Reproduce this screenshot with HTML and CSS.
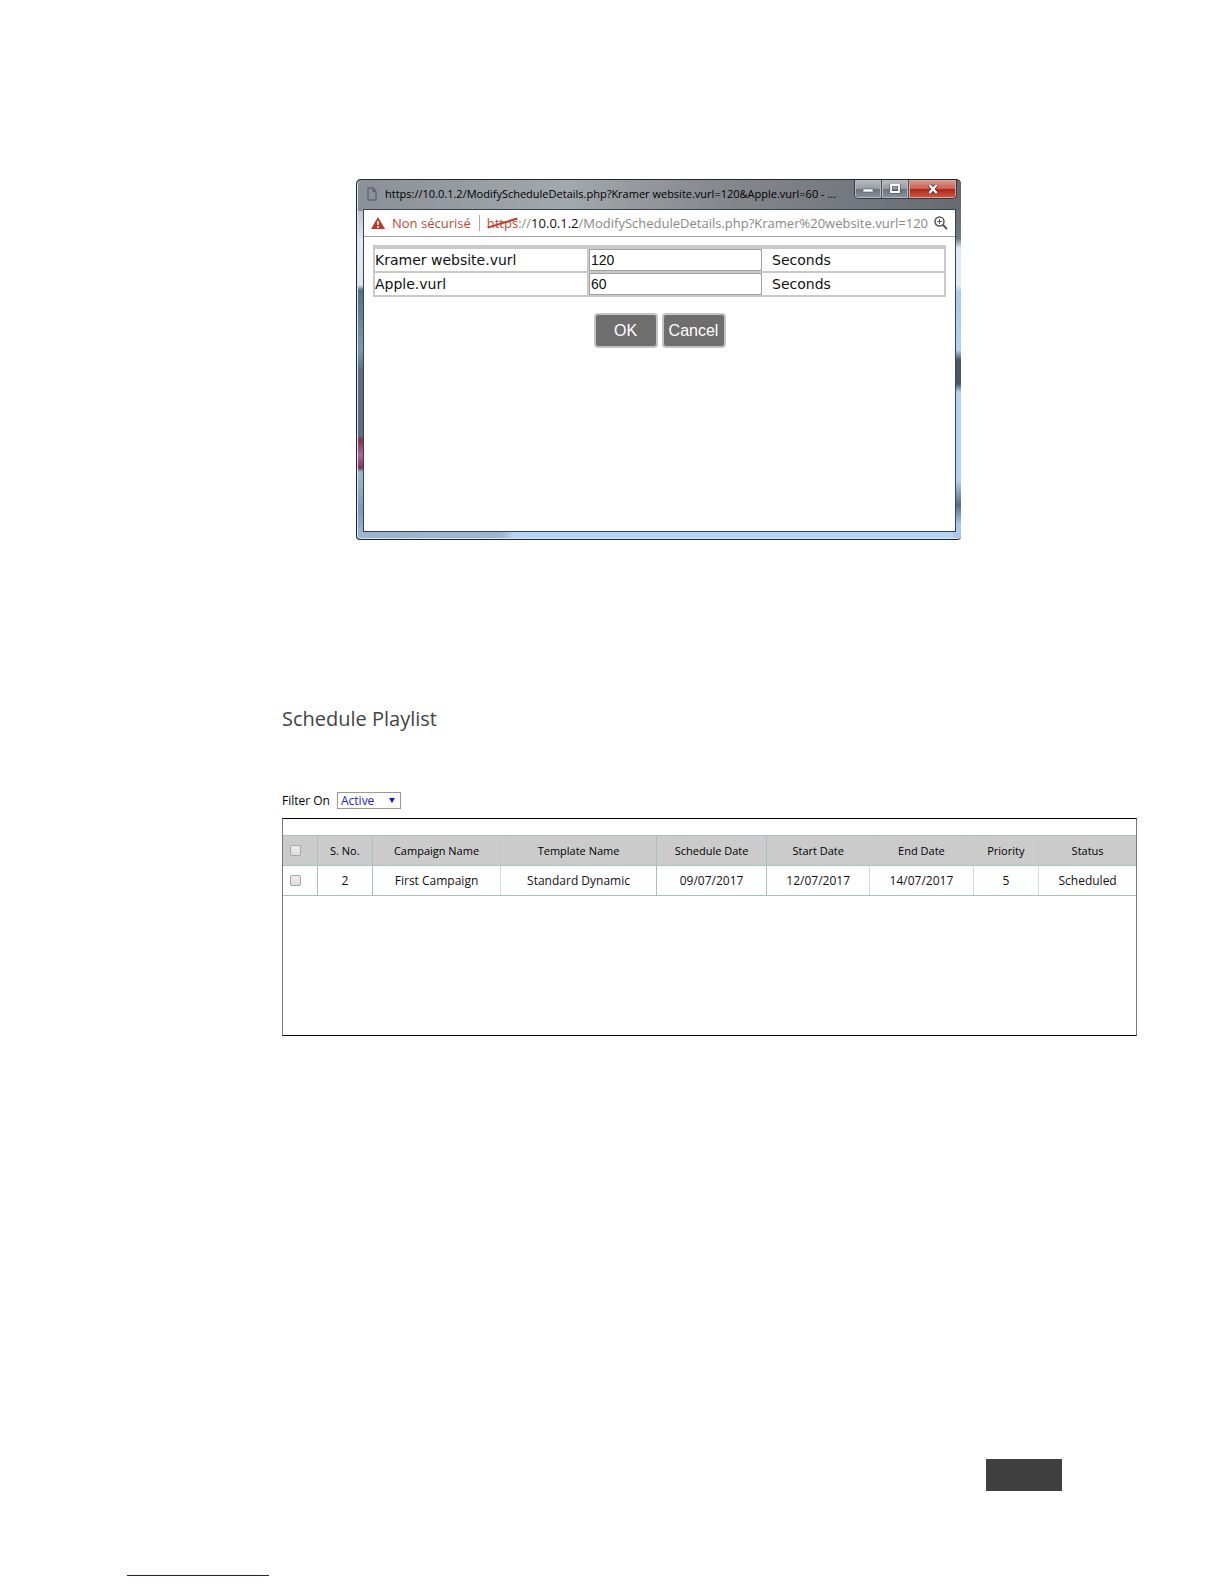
FILE: index.html
```
<!DOCTYPE html>
<html lang="en">
<head>
    <meta charset="utf-8">
    <title>Schedule Playlist</title>
    <link rel="stylesheet" href="styles.css">
</head>
<body>
    <main class="page">
        <div class="window">
            <div class="titlebar">
                <svg class="file-icon" viewBox="0 0 10 14"><path d="M1 1h5l3 3.500v8.500H1zM6 1v3.500h3" fill="none" stroke="#5d6670" stroke-width="1.300"/></svg>
                <span class="title">https://10.0.1.2/ModifyScheduleDetails.php?Kramer website.vurl=120&amp;Apple.vurl=60 - ...</span>
                <div class="win-buttons">
                    <button type="button" class="win-btn" aria-label="Minimize">
                        <svg viewBox="0 0 12 10"><rect x="1" y="5" width="10" height="3" fill="#fff" stroke="#555c66" stroke-width=".6"/></svg>
                    </button>
                    <button type="button" class="win-btn" aria-label="Maximize">
                        <svg viewBox="0 0 12 10"><path d="M2 1h8v7H2z" fill="none" stroke="#4c535d" stroke-width="3"/><path d="M2 1h8v7H2z" fill="none" stroke="#fff" stroke-width="1.800"/></svg>
                    </button>
                    <button type="button" class="win-btn close" aria-label="Close">
                        <svg viewBox="0 0 12 10"><path d="M2.500 1l7 8M9.500 1l-7 8" stroke="#5a3030" stroke-width="4"/><path d="M2.500 1l7 8M9.500 1l-7 8" stroke="#fff" stroke-width="2.400"/></svg>
                    </button>
                </div>
            </div>
            <div class="content">
                <div class="address">
                    <svg class="warn-icon" viewBox="0 0 14 12"><path d="M7 0l7 12H0z" fill="#b93a2a"/><path d="M7 4v4M7 9v2" stroke="#fff" stroke-width="1.500"/></svg>
                    <span class="insecure">Non sécurisé</span>
                    <span class="url"><span class="scheme">https</span>://<span class="host">10.0.1.2</span>/ModifyScheduleDetails.php?Kramer%20website.vurl=120</span>
                    <svg class="zoom-icon" viewBox="0 0 14 14"><path d="M9 9l4 4" stroke="#555" stroke-width="2"/><circle cx="5.500" cy="5.500" r="4.500" fill="none" stroke="#555" stroke-width="1.500"/><path d="M3 5.500h5M5.500 3v5" stroke="#555"/></svg>
                </div>
                <form class="details">
                    <table class="durations">
                        <colgroup><col class="c-file"><col class="c-value"><col></colgroup>
                        <tr>
                            <td><label for="kramer">Kramer website.vurl</label></td>
                            <td class="value"><input type="text" id="kramer" value="120"></td>
                            <td class="unit">Seconds</td>
                        </tr>
                        <tr>
                            <td><label for="apple">Apple.vurl</label></td>
                            <td class="value"><input type="text" id="apple" value="60"></td>
                            <td class="unit">Seconds</td>
                        </tr>
                    </table>
                    <div class="actions">
                        <button type="button">OK</button>
                        <button type="button">Cancel</button>
                    </div>
                </form>
            </div>
        </div>

        <section class="schedule">
            <h1>Schedule Playlist</h1>
            <div class="filter">
                <label for="filter">Filter On</label>
                <select id="filter">
                    <option>Active</option>
                </select>
            </div>
            <div class="list">
                <table class="playlist">
                    <colgroup>
                        <col class="w-check"><col class="w-no"><col class="w-campaign"><col class="w-template"><col class="w-sched"><col class="w-date"><col class="w-date"><col class="w-prio"><col>
                    </colgroup>
                    <thead>
                        <tr>
                            <th class="check"><input type="checkbox" aria-label="Select all"></th>
                            <th>S. No.</th>
                            <th class="soft">Campaign Name</th>
                            <th>Template Name</th>
                            <th>Schedule Date</th>
                            <th class="soft">Start Date</th>
                            <th class="soft">End Date</th>
                            <th class="soft">Priority</th>
                            <th>Status</th>
                        </tr>
                    </thead>
                    <tbody>
                        <tr>
                            <td class="check"><input type="checkbox" aria-label="Select First Campaign"></td>
                            <td>2</td>
                            <td class="soft">First Campaign</td>
                            <td>Standard Dynamic</td>
                            <td>09/07/2017</td>
                            <td class="soft">12/07/2017</td>
                            <td class="soft">14/07/2017</td>
                            <td class="soft">5</td>
                            <td>Scheduled</td>
                        </tr>
                    </tbody>
                </table>
            </div>
        </section>
    </main>
    <footer>
        <div class="page-tab"></div>
        <div class="rule"></div>
    </footer>
</body>
</html>
```
FILE: styles.css
```
* {
    box-sizing: border-box;
}

body {
    margin: 0;
    background-color: #fff;
    color: #111;
    font-family: "Open Sans", sans-serif;
}

.page {
    padding: 179px 87px 0 282px;
}

/* popup window */
.window {
    margin: 0 176px 0 74px;
    padding: 0 5px 7px 7px;
    border-top: 1px solid #20262c;
    border-bottom: 1px solid #20262c;
    border-radius: 5px 5px 4px 4px;
    box-shadow: inset 1px 0 #1c2630, inset 2px 0 #dce6ee, inset 0 -1px #d5e9fa;
    background:
        linear-gradient(90deg, #8b9096, #a3a8ad 35%, #85898e 60%, #666b72) 0 0 / 100% 31px no-repeat,
        linear-gradient(#999fa6 0, #e3e8ee 60px, #dce6ef 105px, #587083 110px, #7f98b1 170px, #5b6f80 190px, #5b6f80 256px, #88304f 260px, #a86a98 275px, #88304f 288px, #9db9d6 292px, #8099b8 330px, #9fbbda) 0 0 / 8px 100% no-repeat,
        linear-gradient(#666b72 0, #72777d 58px, #dfeaf5 68px, #dfeaf5 105px, #abc9ee 112px, #b4d2f2 170px, #4a5566 180px, #4a5566 204px, #b4d2f2 212px, #b4d2f2 300px, #5b6e88 325px, #abc9ee 345px) 100% 0 / 8px 100% no-repeat,
        linear-gradient(90deg, #9bb4cc, #9fb6d0 24%, #b5d3f6 26%, #b5d3f6);
}

.titlebar {
    display: flex;
    align-items: flex-start;
    height: 29px;
    margin-right: -1px;
    padding-left: 4px;
}

.file-icon {
    width: 10px;
    height: 14px;
    margin-top: 7px;
}

.title {
    flex: 1;
    min-width: 0;
    margin-left: 8px;
    overflow: hidden;
    white-space: nowrap;
    font-size: 11px;
    line-height: 28px;
    color: #000;
}

.win-buttons {
    display: flex;
    border: 1px solid #343a42;
    border-top: 0;
    border-radius: 0 0 5px 5px;
    overflow: hidden;
}

.win-btn {
    display: flex;
    align-items: center;
    justify-content: center;
    width: 27px;
    height: 18px;
    padding: 0;
    border: 0;
    border-right: 1px solid #4b525b;
    background: linear-gradient(#b9bec4, #959ba2 48%, #69717a 50%, #8d949c);
    box-shadow: inset 0 0 0 1px #b5babf;
}

.win-btn svg {
    width: 12px;
    height: 10px;
}

.win-btn.close {
    width: 47px;
    border-right: 0;
    background: linear-gradient(#dd9a90, #cc6052 48%, #b02418 50%, #cf5a45);
    box-shadow: inset 0 0 0 1px #d9a49c;
}

.content {
    min-height: 323px;
    border: 1px solid #35424f;
    background-color: #fff;
}

.address {
    display: flex;
    align-items: center;
    height: 27px;
    padding: 0 7px;
    border-bottom: 1px solid #a5a5a5;
    font-size: 13px;
    line-height: 18px;
}

.warn-icon {
    width: 14px;
    height: 12px;
}

.insecure {
    margin-left: 7px;
    padding-right: 8px;
    border-right: 1px solid #aaa;
    line-height: 16px;
    color: #b94a3c;
}

.url {
    flex: 1;
    margin: 0 2px 0 7px;
    white-space: nowrap;
    color: #888;
}

.scheme {
    position: relative;
    color: #c4483a;
}

.scheme::after {
    content: "";
    position: absolute;
    left: 0;
    right: 0;
    top: 8px;
    height: 2px;
    background-color: #c23b2c;
    transform: rotate(-17deg);
}

.host {
    color: #111;
}

.zoom-icon {
    width: 14px;
    height: 14px;
}

.details {
    padding: 8px 9px 0;
}

.durations {
    width: 100%;
    table-layout: fixed;
    border-collapse: collapse;
    border: 2px solid #c9c9c9;
    border-top-width: 4px;
    font-family: "DejaVu Sans", Verdana, sans-serif;
    font-size: 14px;
    line-height: 18px;
}

.c-file {
    width: 214px;
}

.c-value {
    width: 174px;
}

.durations td {
    height: 24px;
    padding: 0;
    border-top: 2px solid #c9c9c9;
}

.durations .value {
    border-left: 2px solid #c9c9c9;
}

.durations input {
    display: block;
    width: 100%;
    height: 22px;
    padding: 0 1px;
    border: 1px solid #a0a0a0;
    font-family: "Liberation Sans", Arial, sans-serif;
    font-size: 14px;
    color: #111;
}

.durations .unit {
    padding-left: 10px;
}

.actions {
    display: flex;
    justify-content: center;
    gap: 4px;
    margin-top: 16px;
}

.actions button {
    width: 64px;
    height: 35px;
    padding: 0;
    border: 2px solid #c4c4c4;
    border-radius: 4px;
    background-color: #6e6e6e;
    color: #fff;
    font-family: "Liberation Sans", Arial, sans-serif;
    font-size: 16px;
}

/* playlist */
.schedule {
    margin-top: 165px;
}

h1 {
    margin: 0;
    font-size: 20px;
    font-weight: 400;
    line-height: 28px;
    color: #444;
}

.filter {
    display: flex;
    align-items: center;
    gap: 7px;
    margin: 59px 0 9px;
    font-size: 12px;
    line-height: 17px;
    color: #000;
}

.filter select {
    appearance: none;
    width: 64px;
    height: 17px;
    padding: 0 3px;
    border: 1px solid #999;
    background: #fff url("data:image/svg+xml,%3Csvg xmlns='http://www.w3.org/2000/svg' viewBox='0 0 6 5'%3E%3Cpath d='M0 0h6L3 5z' fill='%231414c8'/%3E%3C/svg%3E") right 5px center / 6px 5px no-repeat;
    color: #2020d8;
    font-family: "Open Sans", sans-serif;
    font-size: 12px;
    line-height: 15px;
}

.list {
    min-height: 218px;
    padding-top: 16px;
    border: 1px solid #777;
    border-top-color: #000;
    border-bottom-color: #000;
}

.playlist {
    width: 100%;
    table-layout: fixed;
    border-collapse: collapse;
    font-size: 12px;
    line-height: 17px;
    text-align: center;
}

.playlist th,
.playlist td {
    height: 30px;
    padding: 0;
    border: 1px solid #a3c4bf;
}

.playlist th {
    background-color: #cbcbcb;
    font-size: 11px;
    font-weight: 400;
    color: #000;
}

.playlist th.soft {
    border-right-color: #c4cbca;
}

.playlist td.soft {
    border-right-color: #d3dfdd;
}

.playlist th:first-child,
.playlist td:first-child {
    border-left: 0;
}

.playlist th:last-child,
.playlist td:last-child {
    border-right: 0;
}

.playlist .check {
    padding-right: 8px;
}

.playlist input {
    appearance: none;
    display: block;
    width: 11px;
    height: 11px;
    margin: 0 auto;
    border: 1px solid #a5a5a5;
    border-radius: 2px;
    background: linear-gradient(#eee, #ddd);
}

.w-check { width: 4%; }
.w-no { width: 6.500%; }
.w-campaign { width: 15%; }
.w-template { width: 18.300%; }
.w-sched { width: 12.900%; }
.w-date { width: 12.100%; }
.w-prio { width: 7.700%; }

/* page foot */
footer {
    padding: 423px 162px 8px 127px;
}

.page-tab {
    width: 76px;
    height: 32px;
    margin-left: auto;
    background-color: #404040;
}

.rule {
    width: 142px;
    height: 1px;
    margin-top: 84px;
    background-color: #1c1c7c;
}
```
